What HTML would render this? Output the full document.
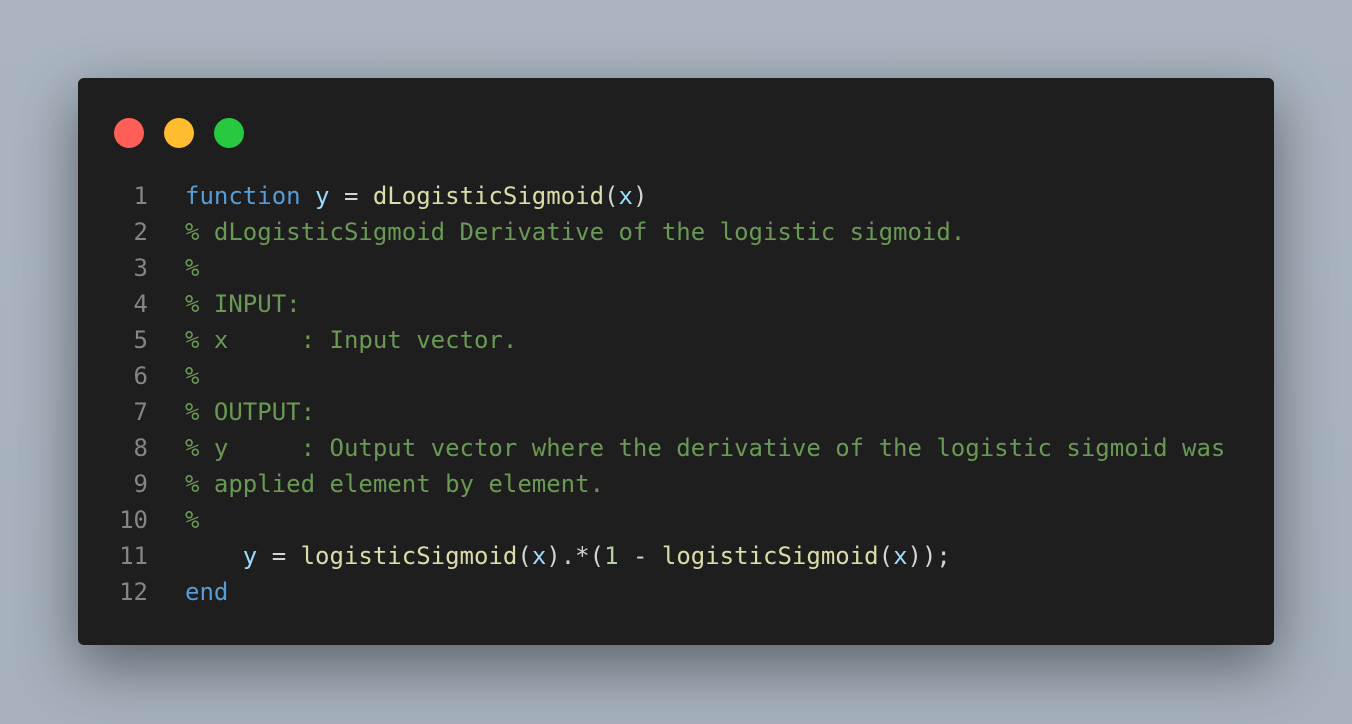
<!DOCTYPE html>
<html><head><meta charset="utf-8"><style>
html,body{margin:0;padding:0}
body{width:1352px;height:724px;background:linear-gradient(180deg,#aab5c1,#a6b1bd);position:relative;overflow:hidden}
.win{position:absolute;left:78px;top:78px;width:1196px;height:567px;background:#1e1e1e;border-radius:6px;box-shadow:0 20px 60px rgba(0,0,0,0.45)}
.dot{position:absolute;top:40px;width:30px;height:30px;border-radius:50%}
.code{position:absolute;left:0;top:100px;font-family:"DejaVu Sans Mono","Liberation Mono",monospace;font-size:24px;line-height:36px;white-space:pre;color:#d4d4d4}
.ln{display:inline-block;width:70px;text-align:right;color:#858585;margin-right:37px}
.k{color:#569cd6}.v{color:#9cdcfe}.f{color:#dcdcaa}.c{color:#6a9955}.n{color:#b5cea8}
</style></head><body>
<div class="win">
<div class="dot" style="left:36px;background:#ff5f57"></div>
<div class="dot" style="left:86px;background:#febc2e"></div>
<div class="dot" style="left:136px;background:#28c840"></div>
<div class="code"><div><span class="ln">1</span><span class="k">function</span> <span class="v">y</span> = <span class="f">dLogisticSigmoid</span>(<span class="v">x</span>)</div><div><span class="ln">2</span><span class="c">% dLogisticSigmoid Derivative of the logistic sigmoid.</span></div><div><span class="ln">3</span><span class="c">%</span></div><div><span class="ln">4</span><span class="c">% INPUT:</span></div><div><span class="ln">5</span><span class="c">% x     : Input vector.</span></div><div><span class="ln">6</span><span class="c">%</span></div><div><span class="ln">7</span><span class="c">% OUTPUT:</span></div><div><span class="ln">8</span><span class="c">% y     : Output vector where the derivative of the logistic sigmoid was</span></div><div><span class="ln">9</span><span class="c">% applied element by element.</span></div><div><span class="ln">10</span><span class="c">%</span></div><div><span class="ln">11</span>    <span class="v">y</span> = <span class="f">logisticSigmoid</span>(<span class="v">x</span>).*(<span class="n">1</span> - <span class="f">logisticSigmoid</span>(<span class="v">x</span>));</div><div><span class="ln">12</span><span class="k">end</span></div></div>
</div>
</body></html>
